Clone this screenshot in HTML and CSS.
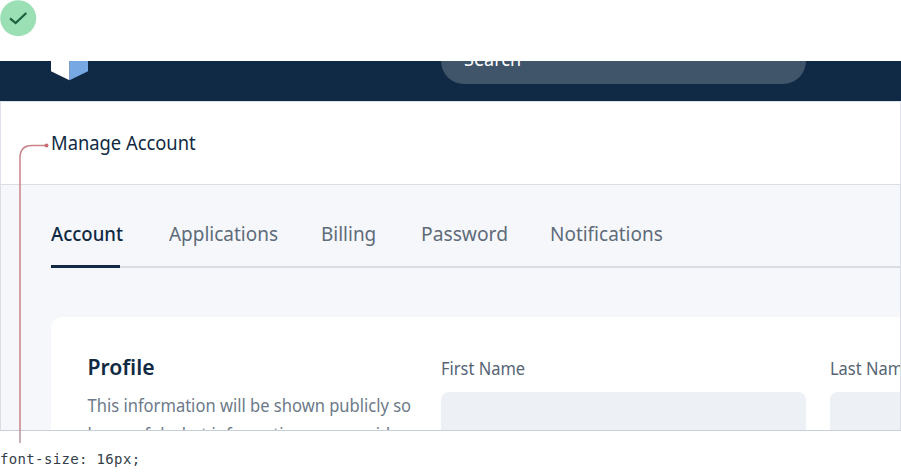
FILE: index.html
```html
<!DOCTYPE html>
<html lang="en">
<head>
<meta charset="utf-8">
<title>Manage Account</title>
<link rel="stylesheet" href="styles.css">
</head>
<body>
<div class="status">
  <svg width="37" height="37" viewBox="0 0 37 37"><circle cx="18.2" cy="18.2" r="18" fill="#9be0b4"/><path d="M10 18.3l5.6 4.8L26.3 13" fill="none" stroke="#1b6140" stroke-width="2.2"/></svg>
</div>
<main class="frame">
  <header class="topbar">
    <svg class="logo" width="37" height="20" viewBox="0 0 37 20"><path d="M0 0h18.5v19.3L0 10.3z" fill="#fff"/><path d="M18.5 0H37v10.3l-18.500 9z" fill="#77a8e4"/></svg>
    <div class="search"><span class="fit">Search</span></div>
  </header>
  <section class="heading"><h1 class="fit">Manage Account</h1></section>
  <section class="content">
    <nav class="tabs">
      <a class="tab active"><span class="fit">Account</span></a>
      <a class="tab applications"><span class="fit">Applications</span></a>
      <a class="tab billing"><span class="fit">Billing</span></a>
      <a class="tab password"><span class="fit">Password</span></a>
      <a class="tab"><span class="fit">Notifications</span></a>
    </nav>
    <div class="card">
      <div class="intro">
        <h2 class="fit">Profile</h2>
        <p class="fit">This information will be shown publicly so<br>be careful what information you provide.</p>
      </div>
      <div class="field"><label class="fit">First Name</label><div class="input"></div></div>
      <div class="field"><label class="fit">Last Name</label><div class="input"></div></div>
    </div>
  </section>
</main>
<footer class="caption">font-size: 16px;</footer>
<svg class="pointer" width="52" height="303" viewBox="0 0 52 303"><path d="M20 303V18Q20 5.500 32 5.500H46" fill="none" stroke="#c98389" stroke-width="1.500"/><path d="M20 291v12" stroke="#bfb7bd" stroke-width="1.500"/><circle cx="46.500" cy="5.500" r="2" fill="#c96b72"/></svg>
</body>
</html>
```
FILE: styles.css
```css
* { box-sizing: border-box; }
body {
  margin: 0;
  width: 901px;
  height: 475px;
  overflow: hidden;
  position: relative;
  background: #fff;
  color: #102a43;
  font-family: "Noto Sans", sans-serif;
}
h1, h2, p { margin: 0; }
.fit {
  display: block;
  width: max-content;
  white-space: nowrap;
  transform: scaleX(.925);
  transform-origin: left;
}
.status { height: 61px; }
.status svg, .logo { display: block; }
.frame { height: 370px; overflow: hidden; border-bottom: 1px solid #c9cedb; }
.topbar {
  display: flex;
  height: 40px;
  padding-left: 51px;
  background: #102a46;
  overflow: hidden;
}
.logo { flex: none; margin-right: 353px; }
.search {
  width: 365px;
  height: 46px;
  margin-top: -23px;
  padding: 8px 23px;
  border-radius: 23px;
  background: #40546a;
  color: #fff;
  font-size: 19px;
  line-height: 26px;
}
.search .fit { transform: scaleX(.95); }
.heading {
  height: 83px;
  padding: 27px 0 0 50px;
  border: 1px solid #dfe2ea;
  border-width: 1px 1px 0;
}
.heading h1 { font-size: 20px; font-weight: 400; line-height: 28px; transform: scaleX(.917); }
.content {
  height: 246px;
  padding-left: 50px;
  border: 1px solid #dadde6;
  border-width: 1px 1px 0;
  background: #f6f7fb;
  overflow: hidden;
}
.tabs {
  display: flex;
  height: 83px;
  border-bottom: 2px solid #d9dce3;
  font-size: 20.5px;
  line-height: 28px;
  color: #5e6b79;
}
.tab { width: 113px; height: 83px; padding-top: 34px; flex: none; }
.active { width: 69px; margin-right: 49px; border-bottom: 3px solid #102a43; color: #102a43; }
.active .fit { font-weight: 500; transform: scaleX(.905); }
.applications { width: 152px; }
.billing { width: 100px; }
.password { width: 129px; }
.password .fit { transform: scaleX(.938); }
.card {
  display: flex;
  width: 1180px;
  height: 180px;
  margin-top: 49px;
  padding: 35px 36px;
  border-radius: 12px 0 0;
  background: #fff;
}
.intro { width: 354px; flex: none; }
.intro h2 { font-size: 22px; font-weight: 600; line-height: 28px; transform: translateX(.5px) scaleX(.963); }
.intro p { margin-top: 11px; font-size: 17.5px; font-weight: 400; line-height: 29px; color: #6c7988; transform: translateX(.5px) scaleX(.945); }
.field { width: 365px; margin-right: 24px; flex: none; color: #566474; }
.field label { font-size: 17.5px; line-height: 32px; transform: scaleX(.94); }
.input { height: 58px; margin-top: 8px; border-radius: 8px; background: #edf0f4; }
.caption {
  padding: 19px 0 0;
  font: 14px/18px "DejaVu Sans Mono", monospace;
  letter-spacing: .35px;
  color: #333e49;
}
.pointer { position: absolute; left: 0; top: 140px; }
```
